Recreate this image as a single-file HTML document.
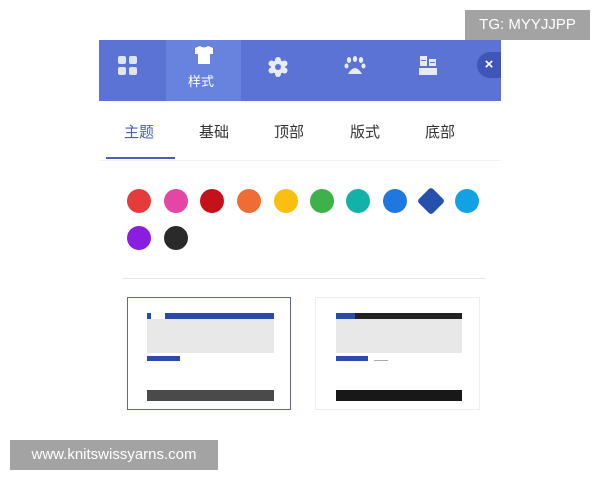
<html><head><style>
body{margin:0;width:600px;height:480px;background:#fff;position:relative;font-family:"Liberation Sans","Noto Sans CJK SC",sans-serif;overflow:hidden}
.a{position:absolute}
.c{position:absolute;width:24px;height:24px;border-radius:50%}
.t{position:absolute;top:121px;font-size:15px;color:#333}
</style></head><body>
<div class="a" style="left:99px;top:40px;width:402px;height:61px;background:#5a73d4"></div>
<div class="a" style="left:166px;top:40px;width:75px;height:61px;background:#6883de"></div>
<svg class="a" style="left:117px;top:55px" width="22" height="22"><rect x="1" y="1" width="8" height="8" rx="2" fill="#dfe5f8"/><rect x="12" y="1" width="8" height="8" rx="2" fill="#dfe5f8"/><rect x="1" y="12" width="8" height="8" rx="2" fill="#dfe5f8"/><rect x="12" y="12" width="8" height="8" rx="2" fill="#dfe5f8"/></svg>
<svg class="a" style="left:193px;top:45px" width="22" height="20"><path d="M2 3 L7 1 Q11 4 15 1 L20 3 L20 9 L17 9 L17 19 L5 19 L5 9 L2 9Z" fill="#fff"/></svg>
<div class="a" style="left:188px;top:71px;font-size:13px;color:#fff">样式</div>
<svg class="a" style="left:268px;top:57px" width="20" height="20"><circle cx="10" cy="10" r="7" fill="#e8ecfa"/><circle cx="10" cy="3" r="3" fill="#e8ecfa"/><circle cx="10" cy="17" r="3" fill="#e8ecfa"/><circle cx="3.5" cy="6.5" r="3" fill="#e8ecfa"/><circle cx="16.5" cy="6.5" r="3" fill="#e8ecfa"/><circle cx="3.5" cy="13.5" r="3" fill="#e8ecfa"/><circle cx="16.5" cy="13.5" r="3" fill="#e8ecfa"/><circle cx="10" cy="10" r="3" fill="#5a73d4"/></svg>
<svg class="a" style="left:344px;top:56px" width="22" height="20"><ellipse cx="5" cy="4" rx="2.2" ry="3" fill="#e8ecfa"/><ellipse cx="11" cy="3" rx="2.2" ry="3" fill="#e8ecfa"/><ellipse cx="17" cy="4" rx="2.2" ry="3" fill="#e8ecfa"/><ellipse cx="2.5" cy="10" rx="2" ry="2.5" fill="#e8ecfa"/><ellipse cx="19.5" cy="10" rx="2" ry="2.5" fill="#e8ecfa"/><path d="M4 18 Q11 6 18 18Z" fill="#e8ecfa"/></svg>
<svg class="a" style="left:418px;top:54px" width="20" height="22"><rect x="2" y="2" width="7" height="10" fill="#e8ecfa"/><rect x="11" y="5" width="7" height="7" fill="#e8ecfa"/><rect x="1" y="14" width="18" height="7" fill="#e8ecfa"/><rect x="3" y="6" width="5" height="1" fill="#5a73d4"/><rect x="12" y="8" width="5" height="1" fill="#5a73d4"/></svg>
<div class="a" style="left:477px;top:52px;width:24px;height:26px;border-radius:13px 0 0 13px;background:#3f56b8;color:#fff;font-size:15px;font-weight:bold;line-height:26px;text-align:center">×</div>
<div class="t" style="left:124px;color:#4a5fb8">主题</div>
<div class="t" style="left:199px">基础</div>
<div class="t" style="left:274px">顶部</div>
<div class="t" style="left:350px">版式</div>
<div class="t" style="left:425px">底部</div>
<div class="a" style="left:106px;top:157px;width:69px;height:2px;background:#4a5fb0"></div>
<div class="a" style="left:99px;top:160px;width:402px;height:1px;background:#f1f1f1"></div>
<div class="c" style="left:127px;top:189px;background:#e53b3b"></div>
<div class="c" style="left:164px;top:189px;background:#e346a4"></div>
<div class="c" style="left:200px;top:189px;background:#c4111a"></div>
<div class="c" style="left:237px;top:189px;background:#f06c35"></div>
<div class="c" style="left:274px;top:189px;background:#fbbf12"></div>
<div class="c" style="left:310px;top:189px;background:#3eb14a"></div>
<div class="c" style="left:346px;top:189px;background:#13b2a9"></div>
<div class="c" style="left:383px;top:189px;background:#1e78e0"></div>
<div class="a" style="left:421px;top:191px;width:20px;height:20px;border-radius:3px;background:#2650ac;transform:rotate(45deg)"></div>
<div class="c" style="left:455px;top:189px;background:#12a1e5"></div>
<div class="c" style="left:127px;top:226px;background:#8b1de0"></div>
<div class="c" style="left:164px;top:226px;background:#2a2a2a"></div>
<div class="a" style="left:122px;top:278px;width:364px;height:1px;background:#e6e6e6"></div>
<div class="a" style="left:127px;top:297px;width:162px;height:111px;border:1px solid #5c64a8"></div>
<div class="a" style="left:147px;top:313px;width:4px;height:6px;background:#2a4ca6"></div>
<div class="a" style="left:165px;top:313px;width:109px;height:6px;background:#2a4ca6"></div>
<div class="a" style="left:147px;top:319px;width:127px;height:34px;background:#e8e8e8"></div>
<div class="a" style="left:147px;top:356px;width:33px;height:5px;background:#2a4ca6"></div>
<div class="a" style="left:147px;top:390px;width:127px;height:11px;background:#4a4a4a"></div>
<div class="a" style="left:315px;top:297px;width:163px;height:111px;border:1px solid #eee"></div>
<div class="a" style="left:336px;top:313px;width:126px;height:6px;background:#222"></div>
<div class="a" style="left:336px;top:313px;width:19px;height:6px;background:#2a4ca6"></div>
<div class="a" style="left:336px;top:319px;width:126px;height:34px;background:#e8e8e8"></div>
<div class="a" style="left:336px;top:356px;width:32px;height:5px;background:#2a4ca6"></div>
<div class="a" style="left:374px;top:360px;width:14px;height:1px;background:#aaa"></div>
<div class="a" style="left:336px;top:390px;width:126px;height:11px;background:#181818"></div>
<div class="a" style="left:465px;top:10px;width:125px;height:30px;background:#a3a3a3;color:#fff;font-size:15px;line-height:30px;text-align:center">TG: MYYJJPP</div>
<div class="a" style="left:10px;top:440px;width:208px;height:30px;background:#a3a3a3;color:#fff;font-size:15px;line-height:30px;text-align:center">www.knitswissyarns.com</div>
</body></html>
